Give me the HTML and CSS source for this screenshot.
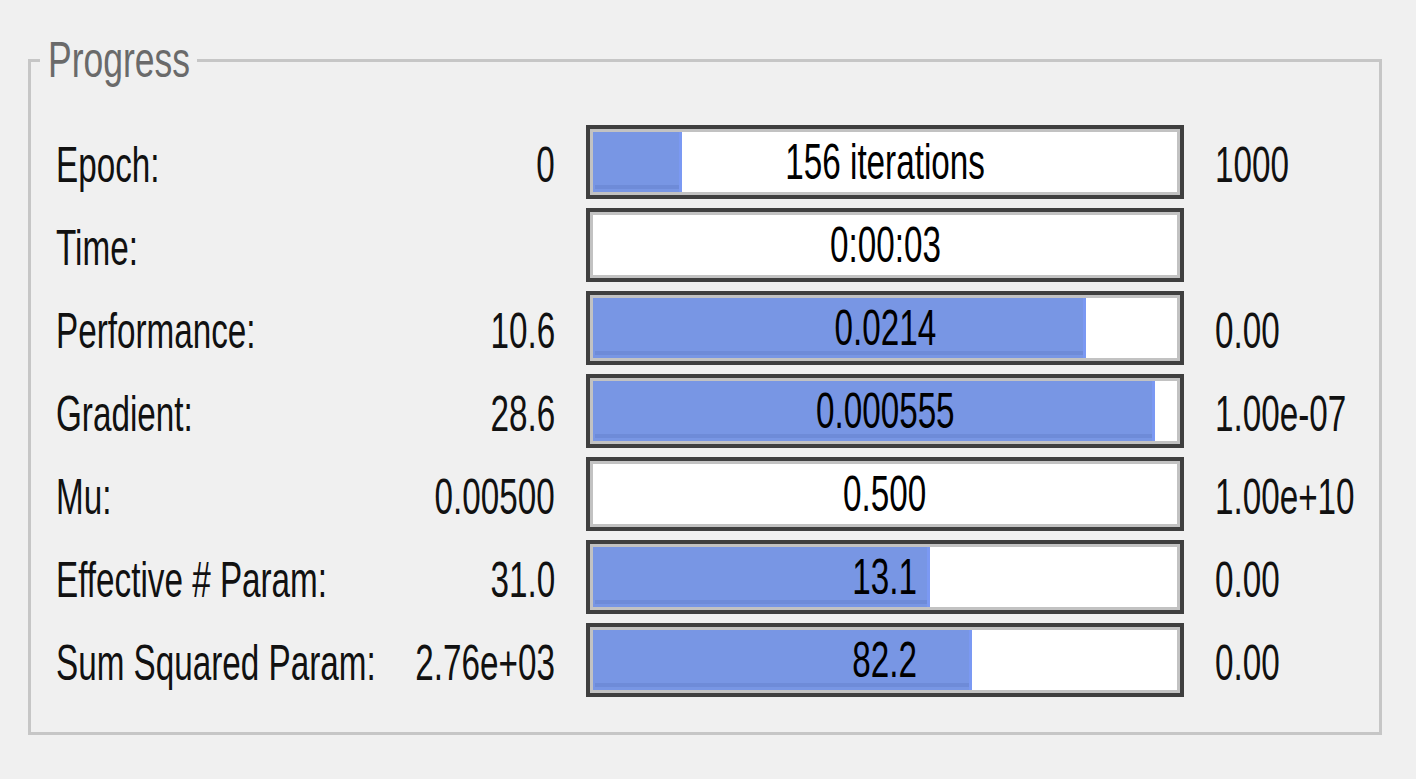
FILE: index.html
```html
<!DOCTYPE html>
<html lang="en">
<head>
<meta charset="utf-8">
<title>Progress</title>
<link rel="stylesheet" href="styles.css">
</head>
<body>
<fieldset class="progress">
  <legend class="progress__legend"><span class="txt txt--left">Progress</span></legend>
  <div class="grid">
    <div class="cell cell--label"><span class="txt txt--left">Epoch:</span></div>
    <div class="cell cell--value"><span class="txt txt--right">0</span></div>
    <div class="bar"><div class="bar__track"><div class="bar__fill" style="width:15.3%"></div><div class="bar__text"><span class="txt txt--center">156 iterations</span></div></div></div>
    <div class="cell cell--label"><span class="txt txt--left">1000</span></div>

    <div class="cell cell--label"><span class="txt txt--left">Time:</span></div>
    <div class="cell cell--value"></div>
    <div class="bar"><div class="bar__track"><div class="bar__text"><span class="txt txt--center">0:00:03</span></div></div></div>
    <div class="cell cell--label"></div>

    <div class="cell cell--label"><span class="txt txt--left">Performance:</span></div>
    <div class="cell cell--value"><span class="txt txt--right">10.6</span></div>
    <div class="bar"><div class="bar__track"><div class="bar__fill" style="width:84.4%"></div><div class="bar__text"><span class="txt txt--center">0.0214</span></div></div></div>
    <div class="cell cell--label"><span class="txt txt--left">0.00</span></div>

    <div class="cell cell--label"><span class="txt txt--left">Gradient:</span></div>
    <div class="cell cell--value"><span class="txt txt--right">28.6</span></div>
    <div class="bar"><div class="bar__track"><div class="bar__fill" style="width:96.3%"></div><div class="bar__text"><span class="txt txt--center">0.000555</span></div></div></div>
    <div class="cell cell--label"><span class="txt txt--left">1.00e-07</span></div>

    <div class="cell cell--label"><span class="txt txt--left">Mu:</span></div>
    <div class="cell cell--value"><span class="txt txt--right">0.00500</span></div>
    <div class="bar"><div class="bar__track"><div class="bar__text"><span class="txt txt--center">0.500</span></div></div></div>
    <div class="cell cell--label"><span class="txt txt--left">1.00e+10</span></div>

    <div class="cell cell--label"><span class="txt txt--left">Effective # Param:</span></div>
    <div class="cell cell--value"><span class="txt txt--right">31.0</span></div>
    <div class="bar"><div class="bar__track"><div class="bar__fill" style="width:57.7%"></div><div class="bar__text"><span class="txt txt--center">13.1</span></div></div></div>
    <div class="cell cell--label"><span class="txt txt--left">0.00</span></div>

    <div class="cell cell--label"><span class="txt txt--left">Sum Squared Param:</span></div>
    <div class="cell cell--value"><span class="txt txt--right">2.76e+03</span></div>
    <div class="bar"><div class="bar__track"><div class="bar__fill" style="width:64.9%"></div><div class="bar__text"><span class="txt txt--center">82.2</span></div></div></div>
    <div class="cell cell--label"><span class="txt txt--left">0.00</span></div>
  </div>
</fieldset>
</body>
</html>
```

FILE: styles.css
```css
* { box-sizing: border-box; }

html, body { margin: 0; }

body {
  width: 1416px;
  height: 779px;
  overflow: hidden;
  padding-top: 35px;
  background: #f0f0f0;
  font-family: "Liberation Sans", Arial, sans-serif;
  font-size: 50px;
  color: #111;
}

.progress {
  margin: 0 34px 0 28px;
  border: 3px solid #c6c6c6;
  padding: 40px 0 35px 25px;
  min-width: 0;
}

.progress__legend {
  margin-left: -16px;
  padding: 0 0 0 8px;
  width: 157px;
  line-height: 50px;
  color: #6a6a6a;
  white-space: nowrap;
}

.progress__legend .txt { transform: scaleX(0.71); }

.grid {
  display: grid;
  grid-template-columns: 320px 148px 598px auto;
  grid-auto-rows: 74px;
  column-gap: 31px;
  row-gap: 9px;
  align-items: center;
}

.cell {
  display: flex;
  padding-top: 6px;
  min-width: 0;
}

.cell--value { justify-content: flex-end; }
.cell--label { justify-content: flex-start; }

.txt {
  display: inline-block;
  flex-shrink: 0;
  white-space: nowrap;
  transform: scaleX(0.665);
}

.txt--left { transform-origin: left center; }
.txt--right { transform-origin: right center; }
.txt--center { transform-origin: center center; }

.bar {
  align-self: stretch;
  border: 4px solid #3f3f3f;
  background: #c2c2c2;
  padding: 3px;
}

.bar__track {
  display: grid;
  height: 100%;
  background: #fff;
}

.bar__fill,
.bar__text { grid-area: 1 / 1; }

.bar__fill {
  justify-self: start;
  display: flex;
  flex-direction: column;
  justify-content: flex-end;
  padding: 0 0 3px 2px;
  background: #7896e4;
  border-right: 3px solid #7b99f3;
}

.bar__fill::after {
  content: "";
  height: 4px;
  background: #6e8bd8;
}

.bar__text {
  display: flex;
  justify-content: center;
  align-items: center;
  color: #000;
}
```
